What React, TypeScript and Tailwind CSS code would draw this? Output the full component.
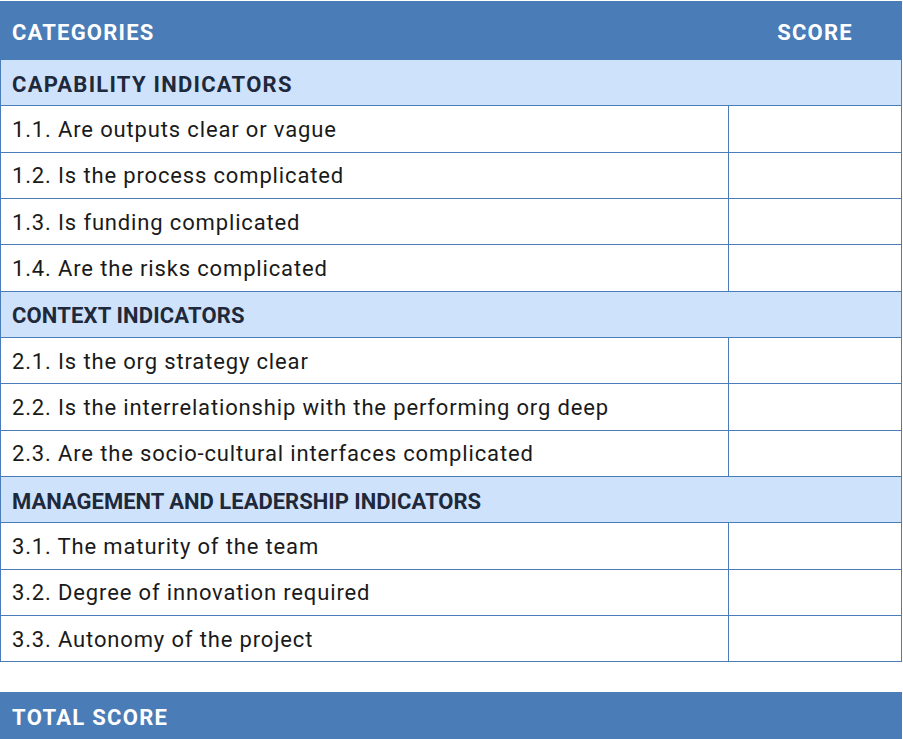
const sections: { title: string; tracking: string; items: string[] }[] = [
  {
    title: "CAPABILITY INDICATORS",
    tracking: "tracking-[1.25px]",
    items: [
      "1.1. Are outputs clear or vague",
      "1.2. Is the process complicated",
      "1.3. Is funding complicated",
      "1.4. Are the risks complicated",
    ],
  },
  {
    title: "CONTEXT INDICATORS",
    tracking: "tracking-[0.15px]",
    items: [
      "2.1. Is the org strategy clear",
      "2.2. Is the interrelationship with the performing org deep",
      "2.3. Are the socio-cultural interfaces complicated",
    ],
  },
  {
    title: "MANAGEMENT AND LEADERSHIP INDICATORS",
    tracking: "tracking-normal",
    items: [
      "3.1. The maturity of the team",
      "3.2. Degree of innovation required",
      "3.3. Autonomy of the project",
    ],
  },
];

export default function App() {
  return (
    <div className="w-[903px] h-[739px] bg-white overflow-hidden font-['Roboto','Liberation_Sans',sans-serif]">
      <div className="w-[902px]">
        {/* header */}
        <div className="flex h-[59px] mt-px pt-[3px] bg-[#4a7cb7] text-white font-bold text-[22px] tracking-[1.2px] items-center">
          <div className="flex-1 pl-3">CATEGORIES</div>
          <div className="w-[174px] text-center">SCORE</div>
        </div>

        <div className="border-l border-r border-[#4a7cb7]">
          {sections.map((s) => (
            <div key={s.title}>
              <div className={`h-[46.33px] flex items-center pl-[11px] pt-[3px] bg-[#cfe2fb] border-b border-[#4a7cb7] text-[22px] font-bold text-[#1e293b] ${s.tracking}`}>
                {s.title}
              </div>
              {s.items.map((item) => (
                <div key={item} className="h-[46.33px] flex border-b border-[#4a7cb7] text-[22px] tracking-[0.85px] text-[#1a1a1a]">
                  <div className="flex-1 flex items-center pl-[11px] pt-px border-r border-[#4a7cb7]">{item}</div>
                  <div className="w-[172px]" />
                </div>
              ))}
            </div>
          ))}
        </div>

        <div className="mt-[30px] h-[48px] flex items-center pl-3 pt-[2px] bg-[#4a7cb7] text-white font-bold text-[22px] tracking-[1.3px]">
          TOTAL SCORE
        </div>
      </div>
    </div>
  );
}
